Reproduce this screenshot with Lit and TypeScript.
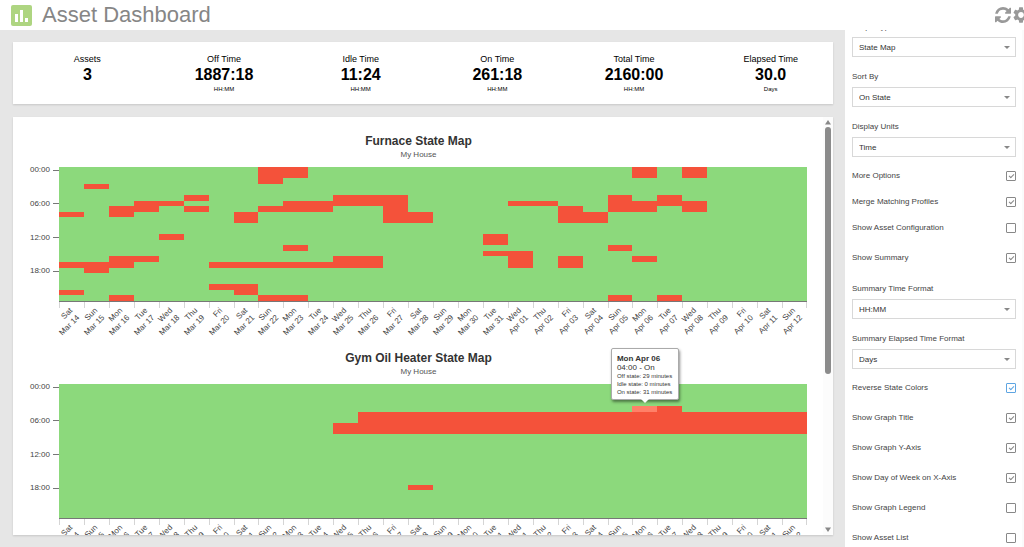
import { LitElement, html, css, svg } from "lit";
import { customElement, property } from "lit/decorators.js";

type Run = [column: number, row: number, rows: number];

interface StateMap {
  title: string;
  site: string;
  runs: Run[];
  active?: Run;
}

const FURNACE: StateMap = {
  title: "Furnace State Map",
  site: "My House",
  runs: [
    [0, 8, 1], [0, 17, 1], [0, 22, 1],
    [1, 3, 1], [1, 17, 2],
    [2, 7, 2], [2, 16, 2], [2, 23, 1],
    [3, 6, 2], [3, 16, 1],
    [4, 6, 1], [4, 12, 1],
    [5, 5, 1], [5, 7, 1],
    [6, 17, 1], [6, 21, 1],
    [7, 8, 2], [7, 17, 1], [7, 21, 2],
    [8, 0, 3], [8, 7, 1], [8, 17, 1], [8, 23, 1],
    [9, 0, 2], [9, 6, 2], [9, 14, 1], [9, 17, 1], [9, 23, 1],
    [10, 6, 2], [10, 17, 1],
    [11, 5, 2], [11, 16, 2],
    [12, 5, 2], [12, 16, 2],
    [13, 5, 5],
    [14, 8, 2],
    [17, 12, 2], [17, 15, 1],
    [18, 6, 1], [18, 15, 3],
    [19, 6, 1],
    [20, 7, 3], [20, 16, 2],
    [21, 8, 2],
    [22, 5, 3], [22, 14, 1], [22, 23, 1],
    [23, 0, 2], [23, 6, 2], [23, 16, 1],
    [24, 5, 2], [24, 23, 1],
    [25, 0, 2], [25, 6, 2],
  ],
};

const HEATER: StateMap = {
  title: "Gym Oil Heater State Map",
  site: "My House",
  runs: [
    [11, 7, 2],
    ...Array.from({ length: 18 }, (_, i): Run => [12 + i, 5, 4]),
    [14, 18, 1],
    [24, 4, 1],
  ],
  active: [23, 4, 1],
};

const WEEKDAYS = ["Sat", "Sun", "Mon", "Tue", "Wed", "Thu", "Fri"];
const DAYS = Array.from({ length: 30 }, (_, i) => {
  const date = i < 18 ? i + 14 : i - 17;
  return {
    weekday: WEEKDAYS[i % 7],
    date: `${i < 18 ? "Mar" : "Apr"} ${String(date).padStart(2, "0")}`,
  };
});

@customElement("state-map")
class StateMapChart extends LitElement {
  @property({ attribute: false }) data!: StateMap;

  static styles = css`
    :host { display: block; color: #555; font-size: 8px; line-height: 10px; }
    .title { margin: 0; padding-left: 17px; font-size: 12px; line-height: 16px; color: #333; text-align: center; }
    .site { margin: 0; padding: 1px 0 7px 17px; text-align: center; color: #555; }
    .body { display: grid; grid-template-columns: 46px minmax(0, 1fr); }
    .hours { display: grid; grid-template-rows: repeat(4, 1fr); height: 135px; }
    .hour { display: flex; align-items: center; justify-content: flex-end; gap: 3px; height: 6px; color: #444; }
    .hour::after { content: ""; width: 6px; height: 1px; background: #777; }
    .plot { position: relative; height: 135px; border-bottom: 1px solid #777; box-sizing: border-box; background: #8cd97c; }
    .map { display: block; width: 100%; height: 100%; }
    .days { grid-column: 2; display: grid; grid-template-columns: repeat(30, minmax(0, 1fr)); height: 43px; }
    .day { display: flex; justify-content: flex-end; box-sizing: border-box; padding: 4px 16px 0 0;
      background: linear-gradient(#d5d5d5, #d5d5d5) 0 0 / 1px 6px no-repeat; }
    .day:last-child { background: linear-gradient(#d5d5d5, #d5d5d5) 0 0 / 1px 6px no-repeat,
      linear-gradient(#d5d5d5, #d5d5d5) 100% 0 / 1px 6px no-repeat; }
    .label { flex: none; height: 20px; white-space: nowrap; text-align: right; transform: rotate(-45deg); transform-origin: 100% 0; color: #444; }
    .tip { position: absolute; transform: translate(-50%, calc(-100% - 1px)); box-sizing: border-box; width: 68px;
      padding: 5px 4px 3px 5px; background: #fff; border: 1px solid #aaa; border-radius: 2px;
      box-shadow: 1px 2px 3px rgba(0, 0, 0, 0.45); font-size: 6px; line-height: 8px; color: #333; white-space: nowrap; }
    .tip::after { content: ""; position: absolute; left: 50%; top: 100%; margin-left: -4px; border: 4px solid transparent; border-top-color: #fff; border-bottom: 0; }
    .tip-main { font-size: 8px; line-height: 9px; }
  `;

  render() {
    const { title, site, runs, active } = this.data;
    return html`
      <h2 class="title">${title}</h2>
      <p class="site">${site}</p>
      <div class="body">
        <div class="hours">
          ${["00:00", "06:00", "12:00", "18:00"].map((h) => html`<div class="hour">${h}</div>`)}
        </div>
        <div class="plot">
          <svg class="map" viewBox="0 0 30 24" preserveAspectRatio="none" shape-rendering="crispEdges" aria-hidden="true">
            ${runs.map(([x, y, h]) => svg`<rect x=${x} y=${y} width="1" height=${h} fill="#f4523a"></rect>`)}
            ${active
              ? svg`<rect x=${active[0]} y=${active[1]} width="1" height=${active[2]} fill="#ff8068"></rect>`
              : null}
          </svg>
          ${active
            ? html`<div class="tip" role="tooltip"
                style="left:${((active[0] + 0.5) / 30) * 100}%;top:${((active[1] - 1) / 24) * 100}%">
                <div class="tip-main"><b>Mon Apr 06</b></div>
                <div class="tip-main">04:00 - On</div>
                <div>Off state: 29 minutes</div>
                <div>Idle state: 0 minutes</div>
                <div>On state: 31 minutes</div>
              </div>`
            : null}
        </div>
        <div class="days">
          ${DAYS.map((d) => html`<div class="day"><div class="label">${d.weekday}<br />${d.date}</div></div>`)}
        </div>
      </div>
    `;
  }
}

const SUMMARY = [
  ["Assets", "3", ""],
  ["Off Time", "1887:18", "HH:MM"],
  ["Idle Time", "11:24", "HH:MM"],
  ["On Time", "261:18", "HH:MM"],
  ["Total Time", "2160:00", "HH:MM"],
  ["Elapsed Time", "30.0", "Days"],
];

@customElement("app-root")
class AppRoot extends LitElement {
  static styles = css`
    :host { display: grid; grid-template-rows: 30px minmax(0, 1fr); height: 100vh; overflow: hidden;
      font-family: "Liberation Sans", Arial, sans-serif; background: #e6e6e6; color: #444; }
    .header { display: flex; align-items: center; padding-left: 11px; background: #fff; overflow: hidden; }
    .logo { flex: none; width: 21px; height: 21px; }
    .name { flex: 1; margin: 0 0 0 10px; font-size: 22px; line-height: 30px; font-weight: 400; color: #868686; }
    .tool { flex: none; display: block; padding: 0; border: 0; background: none; color: #999; }
    .tool svg { display: block; fill: currentColor; }
    .tools { display: flex; flex: none; align-items: center; gap: 2px; width: 29px; }
    .page { display: grid; grid-template-columns: minmax(0, 1fr) 179px; min-height: 0; }
    .main { display: flex; flex-direction: column; gap: 13px; min-height: 0; padding: 12px 12px 12px 13px; }
    .card { background: #fff; box-shadow: 0 1px 2px rgba(0, 0, 0, 0.14); }
    .summary { display: grid; grid-template-columns: repeat(6, 1fr); padding: 10px 0 9px; }
    .stat { display: flex; flex-direction: column; align-items: center; padding-left: 12px; color: #000; }
    .stat-name { font-size: 9px; line-height: 14px; }
    .stat-value { font-size: 16px; line-height: 18px; font-weight: 700; }
    .stat-unit { font-size: 6px; line-height: 11px; }
    .charts { flex: 1; min-height: 0; display: grid; grid-template-columns: minmax(0, 1fr) 10px; grid-template-rows: minmax(0, 1fr); }
    .scroll { overflow: hidden; padding: 16px 16px 0 0; }
    .maps { display: flex; flex-direction: column; gap: 5px; }
    .bar { display: flex; flex-direction: column; align-items: center; gap: 2px; padding: 3px 0; background: #fcfcfc; }
    .bar svg { flex: none; display: block; fill: #888; }
    .track { flex: 1; }
    .thumb { width: 6px; height: 62%; border-radius: 3px; background: #8b8b8b; }
    .side { overflow-y: auto; scrollbar-width: none; box-sizing: border-box; padding: 0 6px 0 7px; background: #fff; border-right: 2px solid #fafafa; font-size: 8px; }
    .form { display: flex; flex-direction: column; gap: 8px; }
    .tight { display: flex; flex-direction: column; gap: 4px; }
    .field { line-height: 20px; }
    .caption { display: block; padding-top: 2px; }
    .pick { position: relative; display: block; }
    .pick select { appearance: none; display: block; width: 100%; height: 20px; margin: 0; padding: 0 6px; border: 1px solid #d8d8d8;
      border-radius: 0; background: #fff; font: inherit; color: #333; }
    .caret { position: absolute; right: 6px; top: 9px; fill: #888; }
    .check { display: flex; align-items: center; justify-content: space-between; line-height: 22px; }
    .box { appearance: none; box-sizing: border-box; display: grid; place-content: center; width: 10px; height: 10px; margin: 0;
      border: 1px solid #888; border-radius: 1px; color: #888; }
    .box:checked::after { content: ""; width: 2px; height: 4px; margin-bottom: 1px; border: solid currentColor; border-width: 0 1px 1px 0; transform: rotate(45deg); }
    .lit { color: #5ea5e2; border-color: #5ea5e2; }
  `;

  firstUpdated() {
    this.renderRoot.querySelector(".side")!.scrollTop = 15;
  }

  private pick(id: string, caption: string, value: string) {
    return html`<div class="field">
      <label class="caption" for=${id}>${caption}</label>
      <div class="pick">
        <select id=${id}><option>${value}</option></select>
        <svg class="caret" width="6" height="3" viewBox="0 0 6 3" aria-hidden="true"><path d="M0 0h6L3 3z" /></svg>
      </div>
    </div>`;
  }

  private check(caption: string, on: boolean, lit = false) {
    return html`<label class="check">${caption}<input type="checkbox" class=${lit ? "box lit" : "box"} .checked=${on} /></label>`;
  }

  render() {
    return html`
      <header class="header">
        <svg class="logo" viewBox="0 0 21 21" aria-hidden="true">
          <rect width="21" height="21" rx="2" fill="#aed581" />
          <path d="M4 9h3v8H4zM9 5h3v12H9zM14 13h3v4h-3z" fill="#fff" />
        </svg>
        <h1 class="name">Asset Dashboard</h1>
        <div class="tools">
          <button class="tool" aria-label="Refresh">
            <svg width="16" height="16" viewBox="0 0 1536 1536"><path d="M1511 928q0 5-1 7-64 268-268 434.500t-478 166.500q-146 0-282.500-55t-243.500-157l-129 129q-19 19-45 19t-45-19-19-45v-448q0-26 19-45t45-19h448q26 0 45 19t19 45-19 45l-137 137q71 66 161 102t187 36q134 0 250-65t186-179q11-17 53-117 8-23 30-23h192q13 0 22.500 9.500t9.500 22.500zm25-800v448q0 26-19 45t-45 19h-448q-26 0-45-19t-19-45 19-45l138-138q-148-137-349-137-134 0-250 65t-186 179q-11 17-53 117-8 23-30 23h-199q-13 0-22.500-9.500t-9.500-22.500v-7q65-268 270-434.500t480-166.500q146 0 284 55.500t245 156.500l130-129q19-19 45-19t45 19 19 45z" /></svg>
          </button>
          <button class="tool" aria-label="Settings">
            <svg width="16" height="16" viewBox="2 2 20 20"><path d="M19.140 12.940c.04-.3.060-.61.060-.94s-.02-.64-.07-.94l2.030-1.580c.18-.14.230-.41.120-.61l-1.920-3.320c-.12-.22-.37-.29-.59-.22l-2.390.96c-.5-.38-1.030-.7-1.620-.94l-.36-2.540c-.04-.24-.24-.41-.48-.41h-3.840c-.24 0-.43.170-.47.410l-.36 2.540c-.59.240-1.130.57-1.620.94l-2.390-.96c-.22-.08-.47 0-.59.220L2.740 8.870c-.12.210-.08.470.12.610l2.030 1.580c-.05.3-.09.630-.09.940s.02.640.07.940l-2.030 1.580c-.18.140-.23.410-.12.610l1.920 3.320c.12.220.37.290.59.220l2.390-.96c.5.380 1.030.7 1.620.94l.36 2.540c.05.240.24.410.48.410h3.840c.24 0 .44-.17.470-.41l.36-2.540c.59-.24 1.130-.56 1.620-.94l2.390.96c.22.080.47 0 .59-.22l1.920-3.320c.12-.22.070-.47-.12-.61l-2.010-1.580zM12 15.600c-1.980 0-3.600-1.620-3.600-3.600s1.620-3.600 3.600-3.600 3.600 1.620 3.600 3.600-1.620 3.600-3.600 3.600z" /></svg>
          </button>
        </div>
      </header>
      <div class="page">
        <main class="main">
          <section class="card summary">
            ${SUMMARY.map(
              ([name, value, unit]) => html`<div class="stat">
                <span class="stat-name">${name}</span>
                <span class="stat-value">${value}</span>
                <span class="stat-unit">${unit}</span>
              </div>`
            )}
          </section>
          <section class="card charts">
            <div class="scroll">
              <div class="maps">
                <state-map .data=${FURNACE}></state-map>
                <state-map .data=${HEATER}></state-map>
              </div>
            </div>
            <div class="bar" aria-hidden="true">
              <svg width="6" height="5" viewBox="0 0 6 5"><path d="M3 0l3 4.500H0z" /></svg>
              <div class="track"><div class="thumb"></div></div>
              <svg width="6" height="5" viewBox="0 0 6 5"><path d="M0 .5h6L3 5z" /></svg>
            </div>
          </section>
        </main>
        <aside class="side">
          <form class="form">
            ${this.pick("graph", "Graph Type", "State Map")}
            ${this.pick("sort", "Sort By", "On State")}
            ${this.pick("units", "Display Units", "Time")}
            <div class="tight">
              ${this.check("More Options", true)}
              ${this.check("Merge Matching Profiles", true)}
              ${this.check("Show Asset Configuration", false)}
            </div>
            ${this.check("Show Summary", true)}
            ${this.pick("time-format", "Summary Time Format", "HH:MM")}
            ${this.pick("elapsed-format", "Summary Elapsed Time Format", "Days")}
            ${this.check("Reverse State Colors", true, true)}
            ${this.check("Show Graph Title", true)}
            ${this.check("Show Graph Y-Axis", true)}
            ${this.check("Show Day of Week on X-Axis", true)}
            ${this.check("Show Graph Legend", false)}
            ${this.check("Show Asset List", false)}
          </form>
        </aside>
      </div>
    `;
  }
}
